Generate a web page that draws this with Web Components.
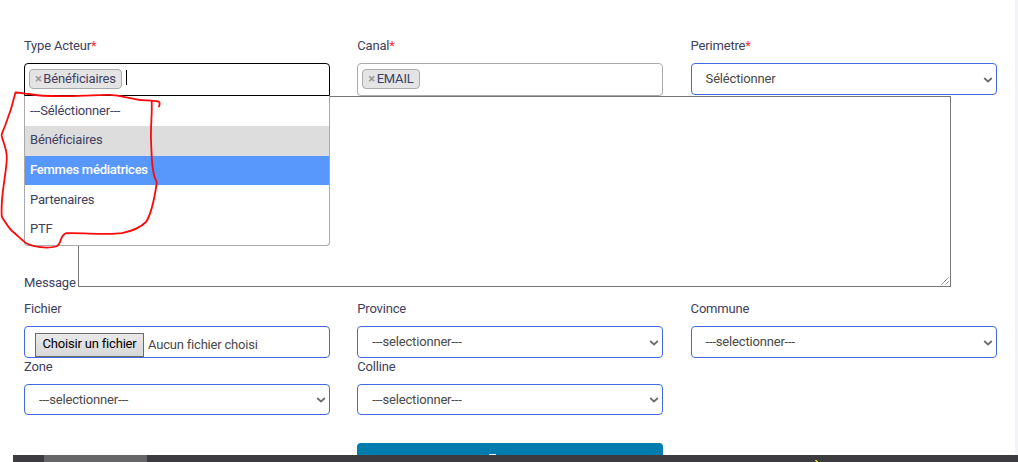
<!DOCTYPE html>
<html lang="fr">
<head>
<meta charset="utf-8">
<title>Message</title>
<style>
html,body{margin:0;height:100%;overflow:hidden;background:#f3f3f9}
body{font:13px/19.5px Roboto,"Liberation Sans",sans-serif;letter-spacing:-.18px;color:#404060}
</style>
</head>
<body>
<message-page></message-page>
<script>
const define = (name, html, setup) => customElements.define(name, class extends HTMLElement {
  constructor() {
    super();
    const t = document.createElement('template');
    t.innerHTML = html;
    this.attachShadow({mode: 'open'}).append(t.content.cloneNode(true));
  }
  connectedCallback() { if (setup) setup(this, this.shadowRoot); }
});

define('form-field', `<style>
:host{display:block;position:relative}
.label{height:20px;margin-bottom:7px;white-space:nowrap}
.star{color:#ff2a2a}
</style><div class="label"><span id="l"></span><span class="star" id="s"></span></div><slot></slot>`,
(el, r) => {
  r.getElementById('l').textContent = el.getAttribute('label');
  r.getElementById('s').textContent = el.hasAttribute('required') ? '*' : '';
});

define('select-box', `<style>
:host{display:flex;align-items:center;justify-content:space-between;box-sizing:border-box;height:32px;border:1px solid #4169e1;border-radius:4px;background:#fff;padding:0 3px 1px 14px;color:#494949}
:host([short]){height:31px;padding-bottom:0}
svg{display:block;flex:none;margin-top:2px}
:host([short]) svg{margin-top:0}
</style><slot></slot><svg width="10" height="8" viewBox="0 0 10 8"><path d="M1.2 2 5 5.5 8.8 2" fill="none" stroke="#6b6b6b" stroke-width="1.7"/></svg>`);

define('tag-box', `<style>
:host{display:flex;align-items:flex-start;box-sizing:border-box;height:33px;border:1px solid #aaa;border-radius:4px;background:#fff;padding:5px 4px}
:host([open]){border-color:#000;border-radius:4px 4px 0 0}
.caret{display:none;width:1px;height:15px;background:#000;margin:1px 0 0 4px}
:host([open]) .caret{display:block}
</style><slot></slot><i class="caret"></i>`);

define('choice-tag', `<style>
:host{display:flex;box-sizing:border-box;height:20px;line-height:18px;border:1px solid #aaa;border-radius:4px;background:#e4e4e4;padding:0 5px}
b{color:#999;margin-right:1.6px}
</style><b>×</b><slot></slot>`);

define('option-list', `<style>
:host{display:block;position:absolute;z-index:2;left:0;right:0;top:60px;box-sizing:border-box;height:150px;border:1px solid #aaa;border-top:0;border-radius:0 0 4px 4px;background:#fff;overflow:hidden}
</style><slot></slot>`);

define('list-option', `<style>
:host{display:block;box-sizing:border-box;height:30px;padding:5px 5px 0}
:host([chosen]){background:#ddd;padding-top:4px}
:host([active]){height:29px;padding-top:4px;background:#5897fb;color:#fff;font-weight:500;letter-spacing:-.24px}
:host(:nth-of-type(4)){height:29px}
</style><slot></slot>`);

define('message-area', `<style>
:host{display:flex;align-items:flex-end}
.label{width:54px;line-height:14px;margin-bottom:-3px;padding-bottom:0;height:14px}
.area{box-sizing:border-box;width:873px;height:191px;border:1px solid #767676;background:#fff;display:flex;align-items:flex-end;justify-content:flex-end}
svg{display:block}
</style><span class="label">Message</span><div class="area"><svg width="10" height="10"><path d="M1.5 8.5 8.5 1.5M5.5 8.5 8.5 5.5" stroke="#555" fill="none" stroke-dasharray="1.2 .5"/></svg></div>`);

define('file-box', `<style>
:host{display:flex;align-items:flex-start;box-sizing:border-box;height:32px;border:1px solid #4169e1;border-radius:4px;background:#fff;padding:6px 10px 0;color:#494949;overflow:hidden}
.btn{box-sizing:border-box;width:109px;height:24px;border:1px solid #6b6b6b;background:linear-gradient(#e9e9e9,#d8d8d8);color:#000;text-align:center;line-height:20px;margin-right:4px;flex:none}
.name{margin-top:2px;letter-spacing:-.2px}
</style><div class="btn">Choisir un fichier</div><span class="name">Aucun fichier choisi</span>`);

/* Only the top edge of the caption shows above the task bar. */
define('submit-button', `<style>
:host{display:flex;justify-content:center;box-sizing:border-box;height:32px;border-radius:4px;background:#007bae;padding:11px 35px 0 0}
i{width:7px;height:2px;background:#e6f1f6}
</style><i></i>`);

define('task-bar', `<style>
:host{display:block;position:absolute;z-index:3;left:13px;right:0;bottom:0;height:7px;background:#3c3b3f;overflow:hidden}
.a{width:103px;height:7px;margin-left:31px;background:#666567}
svg{position:absolute;left:801px;top:4px}
</style><div class="a"></div><svg width="5" height="3"><path d="M1 1h2v1h1v1H2V2H1z" fill="#ded51c"/></svg>`);

define('pen-mark', `<style>
:host{display:block;position:absolute;z-index:4;left:0;top:80px;width:170px;height:175px;pointer-events:none}
svg{display:block}
</style><svg width="170" height="175" viewBox="0 80 170 175" fill="none" stroke="#fa0a0a" stroke-width="1.8" stroke-linecap="round" stroke-linejoin="round"><path d="M159 106.5C161 101.5 159 101 151 100.7C140 100.5 132 99 125 97.2C113 93.5 100 95 84 95.7C60 96.7 42 96.5 29 94C24 93.5 20 92.6 15.5 92.5C13 103 9 116 5 126C3 131 1.2 134 1.7 136C3 142 7 149 6.8 158C6.6 171 2 190 1.7 206C1.5 211 1.5 215 2 217C5 222 8 227 12 231C17 235 22 240 26 243C33 247 47 249 56 246.5C62 244 59 238 64 234.5C67 232 65 233.5 70 233.2C86 233 108 235 122 233.2C132 231 141 227 146 222C152 213 155 195 156.7 183C156.5 179 155 180 154.3 176C151 164 151.7 151 151 140C150.4 129 152.3 114 151.7 101.5"/></svg>`);

define('message-page', `<style>
:host{display:block;position:relative;box-sizing:border-box;width:1015px;height:462px;background:#fff;padding:36px 18.4px 0 24px}
.row{display:grid;grid-template-columns:repeat(3,minmax(0,1fr));column-gap:27.3px}
.r1{height:60px}.r2{height:58px;margin-top:12px}.r3{height:58px}.r4{margin-top:28px;height:19px}
task-bar{right:-3px}
submit-button{grid-column:2}
</style>
<div class="row r1">
<form-field label="Type Acteur" required><tag-box open><choice-tag>Bénéficiaires</choice-tag></tag-box><option-list><list-option>---Séléctionner---</list-option><list-option chosen>Bénéficiaires</list-option><list-option active>Femmes médiatrices</list-option><list-option>Partenaires</list-option><list-option>PTF</list-option></option-list></form-field>
<form-field label="Canal" required><tag-box><choice-tag>EMAIL</choice-tag></tag-box></form-field>
<form-field label="Perimetre" required><select-box>Séléctionner</select-box></form-field>
</div>
<message-area></message-area>
<div class="row r2">
<form-field label="Fichier"><file-box></file-box></form-field>
<form-field label="Province"><select-box>---selectionner---</select-box></form-field>
<form-field label="Commune"><select-box>---selectionner---</select-box></form-field>
</div>
<div class="row r3">
<form-field label="Zone"><select-box short>---selectionner---</select-box></form-field>
<form-field label="Colline"><select-box short>---selectionner---</select-box></form-field>
</div>
<div class="row r4"><submit-button></submit-button></div>
<task-bar></task-bar><pen-mark></pen-mark>`);
</script>
</body>
</html>
